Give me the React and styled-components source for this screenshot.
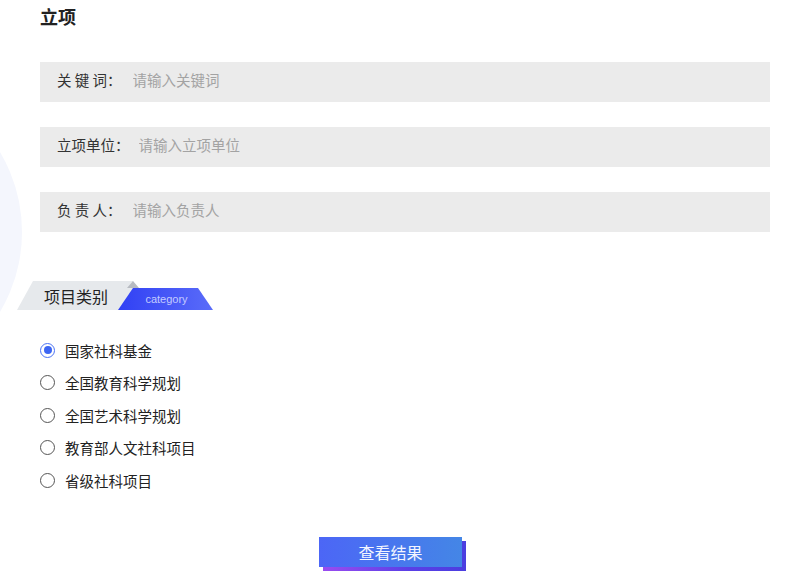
import React from "react";
import styled, { createGlobalStyle } from "styled-components";

const Global = createGlobalStyle`
  html, body { margin: 0; padding: 0; background: #fff; }
  body { font-family: "Noto Sans CJK SC", "Noto Sans", sans-serif; }
  * { box-sizing: border-box; }
`;

const Page = styled.div`
  position: relative;
  width: 799px;
  height: 583px;
  overflow: hidden;
  background: #fff;
`;

const Deco = styled.div`
  position: absolute;
  left: -290px;
  top: 76px;
  width: 312px;
  height: 312px;
  border-radius: 50%;
  background: #f4f6fd;
`;

const Content = styled.div`
  position: relative;
  padding: 7px 29px 0 40px;
  display: flex;
  flex-direction: column;
`;

const Title = styled.h1`
  margin: 0;
  font-size: 18px;
  line-height: 18px;
  font-weight: 700;
  color: #222;
`;

const Fields = styled.div`
  margin-top: 37px;
  display: flex;
  flex-direction: column;
  gap: 25px;
`;

const Field = styled.label`
  height: 40px;
  background: #ebebeb;
  display: flex;
  align-items: center;
  padding-left: 17px;
  padding-bottom: 6px;
  font-size: 14.5px;
`;

const FieldLabel = styled.span`
  color: #333;
  white-space: pre;
  margin-right: ${(p) => p.$gap}px;
`;

const FieldInput = styled.input`
  flex: 1;
  border: none;
  background: transparent;
  outline: none;
  font: inherit;
  font-size: 14.5px;
  color: #333;
  padding: 0;
  &::placeholder { color: #a3a3a3; }
`;

const Tab = styled.div`
  position: relative;
  margin-top: 49px;
  margin-left: -23px;
  display: flex;
  align-items: flex-end;
  height: 29px;
  &::after {
    content: "";
    position: absolute;
    left: 110px;
    top: 0;
    width: 12px;
    height: 7px;
    background: #b7bbc1;
    clip-path: polygon(50% 0, 100% 100%, 0 100%);
  }
`;

const TabMain = styled.div`
  width: 126px;
  height: 29px;
  background: #e6e9ec;
  clip-path: polygon(16px 0, 116px 0, 126px 29px, 0 29px);
  padding-left: 27px;
  display: flex;
  align-items: center;
  font-size: 16px;
  color: #222;
`;

const TabSub = styled.div`
  width: 95px;
  height: 22px;
  margin-left: -25px;
  background: linear-gradient(90deg, #3040f4, #5a6cf9);
  clip-path: polygon(15px 0, 80px 0, 95px 22px, 0 22px);
  display: flex;
  align-items: center;
  justify-content: center;
  font-family: "Liberation Sans", Arial, sans-serif;
  font-size: 11px;
  color: #c3caff;
  padding-left: 2px;
`;

const RadioList = styled.div`
  margin-top: 30px;
  display: flex;
  flex-direction: column;
  gap: 12.5px;
`;

const RadioRow = styled.label`
  height: 20px;
  display: flex;
  align-items: center;
  gap: 10px;
  font-size: 14.5px;
  color: #222;
  cursor: pointer;
`;

const RadioDot = styled.span`
  width: 15px;
  height: 15px;
  border-radius: 50%;
  border: 1px solid ${(p) => (p.$on ? "#4a72f5" : "#555")};
  display: flex;
  align-items: center;
  justify-content: center;
  flex: none;
  &::after {
    content: "";
    width: 8px;
    height: 8px;
    border-radius: 50%;
    background: #3d66f3;
    display: ${(p) => (p.$on ? "block" : "none")};
  }
`;

const ButtonWrap = styled.div`
  margin-top: 47px;
  margin-left: 279px;
  position: relative;
  width: 143px;
  height: 30px;
  &::before {
    content: "";
    position: absolute;
    left: 4px;
    top: 4px;
    width: 143px;
    height: 30px;
    background: linear-gradient(90deg, #9a4cf0, #5a3fe6 60%, #4b3ee0);
  }
`;

const Button = styled.button`
  position: relative;
  width: 143px;
  height: 30px;
  border: none;
  padding: 0;
  background: linear-gradient(90deg, #4c66f6, #4486e6);
  color: #f2f5ff;
  font-family: inherit;
  font-size: 16px;
  cursor: pointer;
`;

const fields = [
  { label: "关 键 词：", placeholder: "请输入关键词", gap: 11 },
  { label: "立项单位：", placeholder: "请输入立项单位", gap: 9 },
  { label: "负 责 人：", placeholder: "请输入负责人", gap: 11 },
];

const options = [
  "国家社科基金",
  "全国教育科学规划",
  "全国艺术科学规划",
  "教育部人文社科项目",
  "省级社科项目",
];

export default function App() {
  const [sel, setSel] = React.useState(0);
  return (
    <Page>
      <Global />
      <Deco />
      <Content>
        <Title>立项</Title>
        <Fields>
          {fields.map((f) => (
            <Field key={f.label}>
              <FieldLabel $gap={f.gap}>{f.label}</FieldLabel>
              <FieldInput placeholder={f.placeholder} />
            </Field>
          ))}
        </Fields>
        <Tab>
          <TabMain>项目类别</TabMain>
          <TabSub>category</TabSub>
        </Tab>
        <RadioList>
          {options.map((o, i) => (
            <RadioRow key={o} onClick={() => setSel(i)}>
              <RadioDot $on={sel === i} />
              {o}
            </RadioRow>
          ))}
        </RadioList>
        <ButtonWrap>
          <Button>查看结果</Button>
        </ButtonWrap>
      </Content>
    </Page>
  );
}
